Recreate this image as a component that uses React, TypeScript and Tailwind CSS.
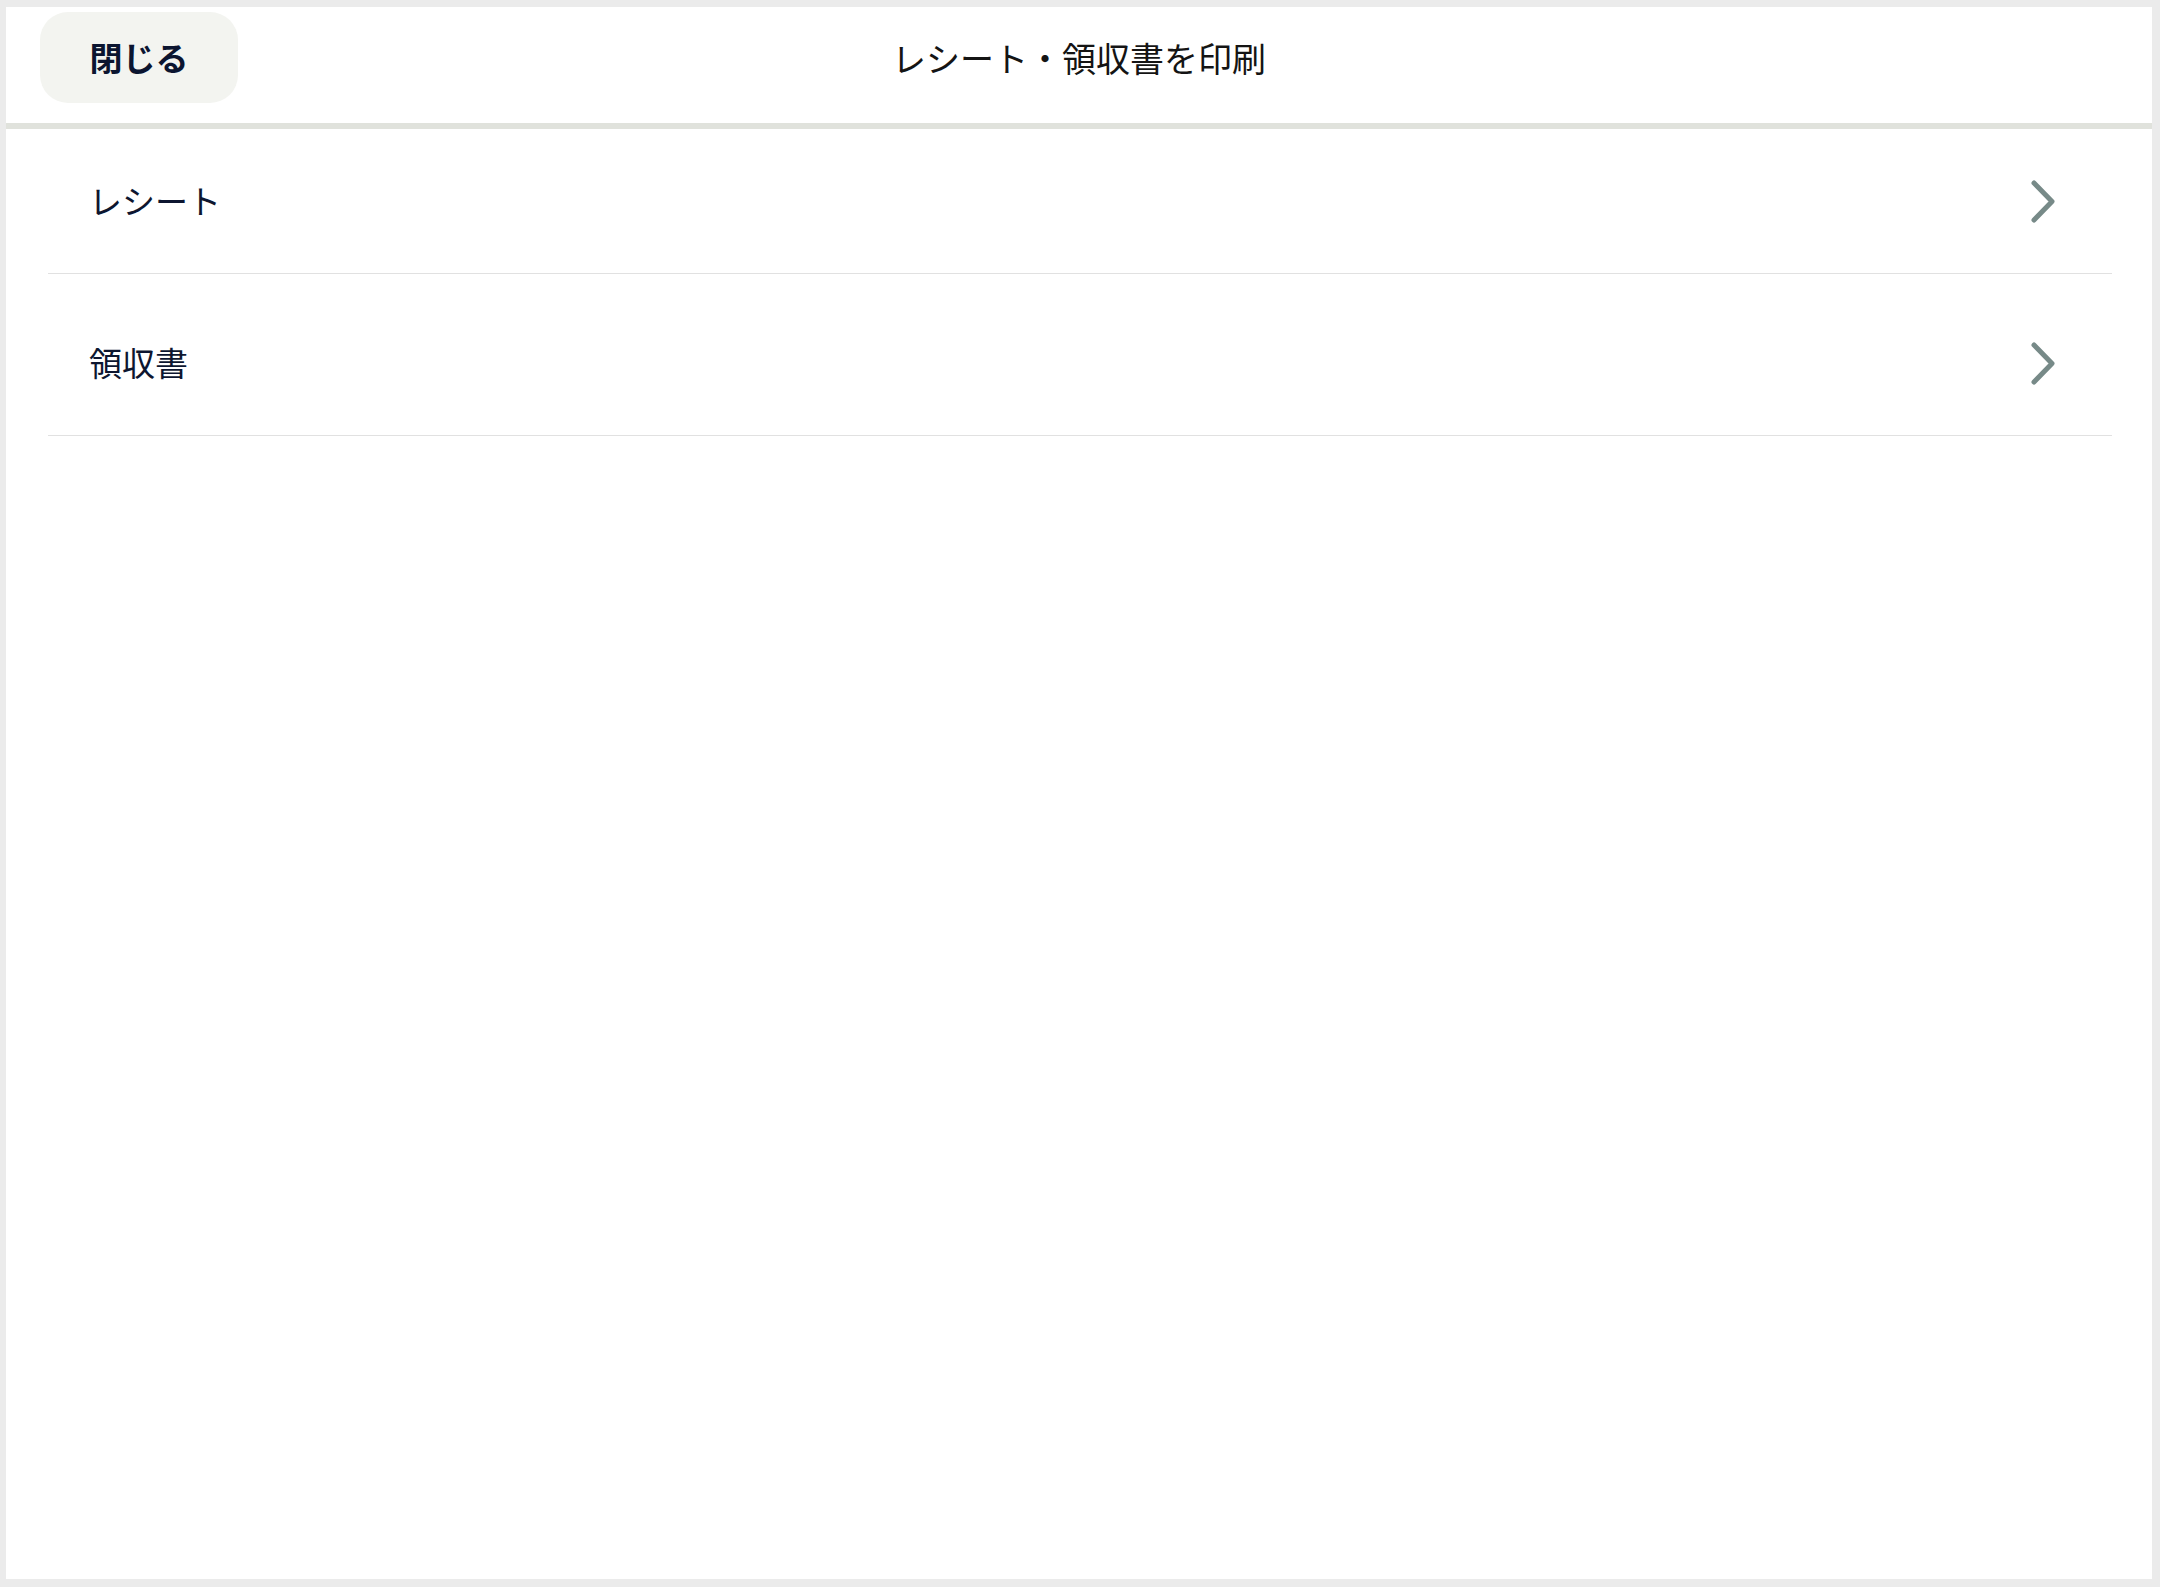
const font = {
  fontFamily: '"Noto Sans CJK JP", "Noto Sans", sans-serif',
};

function Chevron() {
  return (
    <svg width="24" height="43" viewBox="0 0 24 43" fill="none" aria-hidden="true">
      <polyline
        points="3,3 21,21.5 3,40"
        stroke="#778a88"
        strokeWidth="5"
        strokeLinecap="round"
        strokeLinejoin="round"
      />
    </svg>
  );
}

const items = ["レシート", "領収書"];

export default function App() {
  return (
    <div
      className="h-screen w-full bg-[#ebebeb] pt-[7px] pl-[6px] pr-[8px] pb-[8px] flex"
      style={font}
    >
      <div className="flex-1 bg-white flex flex-col">
        {/* Header */}
        <div className="grid grid-cols-[1fr_auto_1fr] items-center px-[34px] pt-[5px] pb-[20px] border-b-[6px] border-[#e0e2dc]">
          <div>
            <button className="w-[198px] h-[91px] rounded-[28px] bg-[#f3f4f0] text-[33px] font-bold text-[#0b1530] flex items-center justify-center">
              閉じる
            </button>
          </div>
          <div className="text-[34px] text-[#141414] leading-none">
            レシート・領収書を印刷
          </div>
          <div />
        </div>

        {/* List */}
        <div className="pl-[42px] pr-[40px] flex flex-col gap-[17px]">
          {items.map((label) => (
            <div
              key={label}
              className="h-[145px] border-b border-[#e1e1e1] flex items-center justify-between pl-[41px] pr-[57px]"
            >
              <span className="text-[33px] text-[#0d1630]">{label}</span>
              <Chevron />
            </div>
          ))}
        </div>
      </div>
    </div>
  );
}
